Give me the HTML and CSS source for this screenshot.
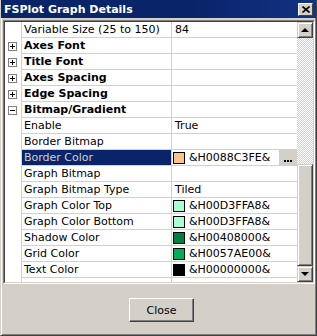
FILE: index.html
```html
<!DOCTYPE html>
<html lang="en">
<head>
    <meta charset="UTF-8">
    <title>FSPlot Graph Details</title>
    <link rel="stylesheet" href="styles.css">
</head>
<body>
    <div class="window">
        <div class="titlebar">
            <span class="title">FSPlot Graph Details</span>
            <span class="close-x">
                <svg width="8" height="7" viewBox="0 0 8 7"><path d="M0.5 0.5 L7.5 6.5 M7.5 0.5 L0.5 6.5" stroke="#000" stroke-width="1.6"/></svg>
            </span>
        </div>
        <div class="body">
            <div class="grid">
                <div class="grid-inner">
                    <div class="props">
                        <div class="row">
                            <div class="gutter"></div>
                            <div class="name">Variable Size (25 to 150)</div>
                            <div class="value">84</div>
                        </div>
                        <div class="row category">
                            <div class="gutter"><span class="expander plus"></span></div>
                            <div class="name">Axes Font</div>
                            <div class="value"></div>
                        </div>
                        <div class="row category">
                            <div class="gutter"><span class="expander plus"></span></div>
                            <div class="name">Title Font</div>
                            <div class="value"></div>
                        </div>
                        <div class="row category">
                            <div class="gutter"><span class="expander plus"></span></div>
                            <div class="name">Axes Spacing</div>
                            <div class="value"></div>
                        </div>
                        <div class="row category">
                            <div class="gutter"><span class="expander plus"></span></div>
                            <div class="name">Edge Spacing</div>
                            <div class="value"></div>
                        </div>
                        <div class="row category">
                            <div class="gutter"><span class="expander"></span></div>
                            <div class="name">Bitmap/Gradient</div>
                            <div class="value"></div>
                        </div>
                        <div class="row">
                            <div class="gutter"></div>
                            <div class="name">Enable</div>
                            <div class="value">True</div>
                        </div>
                        <div class="row">
                            <div class="gutter"></div>
                            <div class="name">Border Bitmap</div>
                            <div class="value"></div>
                        </div>
                        <div class="row selected">
                            <div class="gutter"></div>
                            <div class="name">Border Color</div>
                            <div class="value">
                                <span class="swatch" style="background:#fec388"></span>&amp;H0088C3FE&amp;
                                <span class="dots"><i></i><i></i><i></i></span>
                            </div>
                        </div>
                        <div class="row">
                            <div class="gutter"></div>
                            <div class="name">Graph Bitmap</div>
                            <div class="value"></div>
                        </div>
                        <div class="row">
                            <div class="gutter"></div>
                            <div class="name">Graph Bitmap Type</div>
                            <div class="value">Tiled</div>
                        </div>
                        <div class="row">
                            <div class="gutter"></div>
                            <div class="name">Graph Color Top</div>
                            <div class="value"><span class="swatch" style="background:#a8ffd3"></span>&amp;H00D3FFA8&amp;</div>
                        </div>
                        <div class="row">
                            <div class="gutter"></div>
                            <div class="name">Graph Color Bottom</div>
                            <div class="value"><span class="swatch" style="background:#a8ffd3"></span>&amp;H00D3FFA8&amp;</div>
                        </div>
                        <div class="row">
                            <div class="gutter"></div>
                            <div class="name">Shadow Color</div>
                            <div class="value"><span class="swatch" style="background:#008040"></span>&amp;H00408000&amp;</div>
                        </div>
                        <div class="row">
                            <div class="gutter"></div>
                            <div class="name">Grid Color</div>
                            <div class="value"><span class="swatch" style="background:#00ae57"></span>&amp;H0057AE00&amp;</div>
                        </div>
                        <div class="row">
                            <div class="gutter"></div>
                            <div class="name">Text Color</div>
                            <div class="value"><span class="swatch" style="background:#000000"></span>&amp;H00000000&amp;</div>
                        </div>
                        <div class="row">
                            <div class="gutter"></div>
                            <div class="name"></div>
                            <div class="value"></div>
                        </div>
                    </div>
                    <div class="scrollbar">
                        <div class="sb-btn"><span class="arrow-up"></span></div>
                        <div class="sb-track"></div>
                        <div class="sb-thumb"></div>
                        <div class="sb-btn"><span class="arrow-down"></span></div>
                    </div>
                </div>
            </div>
            <div class="footer">
                <button class="btn">Close</button>
            </div>
        </div>
    </div>
</body>
</html>
```

FILE: styles.css
```css
body {
    margin: 0;
    font-family: "DejaVu Sans", Tahoma, sans-serif;
    font-size: 11px;
    color: #000;
    background: #d4d0c8;
}
.window {
    box-sizing: border-box;
    width: 317px;
    height: 336px;
    background: #d4d0c8;
    border-left: 1px solid #d4d0c8;
    border-right: 1px solid #404040;
    border-bottom: 1px solid #404040;
    box-shadow: inset 1px 0 #fff, inset -1px -1px #808080;
    display: flex;
    flex-direction: column;
}
.titlebar {
    height: 18px;
    background: linear-gradient(to right, #0a246a, #0a246a 60%, #123283);
    display: flex;
    align-items: center;
    justify-content: space-between;
    padding: 0 3px 0 3px;
}
.title {
    color: #fff;
    font-weight: bold;
    font-size: 11px;
}
.close-x {
    box-sizing: border-box;
    width: 15px;
    height: 13px;
    background: #d4d0c8;
    border: 1px solid;
    border-color: #fff #404040 #404040 #fff;
    display: flex;
    align-items: center;
    justify-content: center;
}
.body {
    flex: 1;
    display: flex;
    flex-direction: column;
    padding: 2px 1px 0 2px;
}
.grid {
    width: 312px;
    height: 264px;
    box-sizing: border-box;
    border: 1px solid;
    border-color: #808080 #fff #fff #808080;
}
.grid-inner {
    height: 100%;
    box-sizing: border-box;
    border: 1px solid;
    border-color: #404040 #d4d0c8 #d4d0c8 #404040;
    background: #fff;
    display: flex;
    overflow: hidden;
}
.props {
    flex: 1;
    overflow: hidden;
}
.row {
    display: flex;
    height: 16px;
    line-height: 15px;
}
.gutter {
    width: 16px;
    border-right: 1px solid #d4d0c8;
    display: flex;
    align-items: center;
}
.name {
    box-sizing: border-box;
    width: 150px;
    padding-left: 2px;
    border-right: 1px solid #d4d0c8;
    border-bottom: 1px solid #d4d0c8;
    white-space: nowrap;
    overflow: hidden;
}
.value {
    flex: 1;
    padding-left: 3px;
    border-bottom: 1px solid #d4d0c8;
    display: flex;
    align-items: center;
    white-space: nowrap;
}
.category .name {
    font-weight: bold;
}
.selected .name {
    background: #0a246a;
    color: #d4d0c8;
}
.selected .value {
    padding-left: 1px;
}
.expander {
    box-sizing: border-box;
    width: 9px;
    height: 9px;
    margin-left: 3px;
    border: 1px solid #808080;
    position: relative;
}
.expander::before,
.expander.plus::after {
    content: "";
    position: absolute;
    background: #000;
}
.expander::before {
    left: 1px;
    top: 3px;
    width: 5px;
    height: 1px;
}
.expander.plus::after {
    left: 3px;
    top: 1px;
    width: 1px;
    height: 5px;
}
.swatch {
    box-sizing: border-box;
    width: 12px;
    height: 12px;
    border: 1px solid #000;
    margin-right: 4px;
}
.value .swatch:first-child {
    margin-left: -2px;
}
.selected .value .swatch:first-child {
    margin-left: 0;
}
.dots {
    margin-left: auto;
    width: 18px;
    height: 100%;
    background: #d4d0c8;
    display: flex;
    align-items: flex-end;
    justify-content: center;
    gap: 1px;
    padding-bottom: 3px;
    box-sizing: border-box;
}
.dots i {
    width: 2px;
    height: 2px;
    background: #000;
}
.scrollbar {
    width: 16px;
    display: flex;
    flex-direction: column;
}
.sb-btn {
    box-sizing: border-box;
    height: 16px;
    background: #d4d0c8;
    border: 1px solid;
    border-color: #d4d0c8 #404040 #404040 #d4d0c8;
    box-shadow: inset 1px 1px #fff, inset -1px -1px #808080;
    display: flex;
    align-items: center;
    justify-content: center;
}
.arrow-up {
    width: 0;
    height: 0;
    border-left: 4px solid transparent;
    border-right: 4px solid transparent;
    border-bottom: 4px solid #000;
}
.arrow-down {
    width: 0;
    height: 0;
    border-left: 4px solid transparent;
    border-right: 4px solid transparent;
    border-top: 4px solid #000;
}
.sb-track {
    height: 126px;
    background-image: repeating-conic-gradient(#fff 0 25%, #d4d0c8 0 50%);
    background-size: 2px 2px;
}
.sb-thumb {
    flex: 1;
    box-sizing: border-box;
    background: #d4d0c8;
    border: 1px solid;
    border-color: #d4d0c8 #404040 #404040 #d4d0c8;
    box-shadow: inset 1px 1px #fff, inset -1px -1px #808080;
}
.footer {
    padding: 14px 0 0 126px;
}
.btn {
    box-sizing: border-box;
    width: 65px;
    height: 24px;
    font-family: "DejaVu Sans", Tahoma, sans-serif;
    font-size: 11px;
    color: #000;
    background: #d4d0c8;
    border: 1px solid;
    border-color: #fff #404040 #404040 #fff;
    box-shadow: inset -1px -1px #808080;
    padding: 0;
}
```
